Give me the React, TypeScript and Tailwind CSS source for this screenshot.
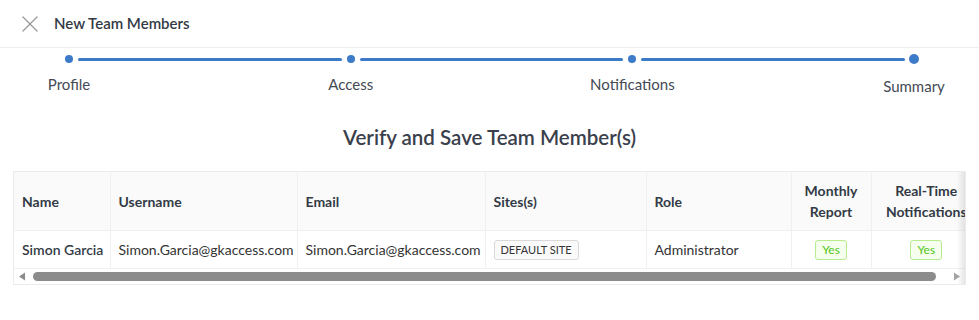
import { X } from 'lucide-react'

const steps = ['Profile', 'Access', 'Notifications', 'Summary']

const font = { fontFamily: 'Lato, "Open Sans", "Noto Sans", sans-serif' }

function Stepper() {
  return (
    <div className="flex items-start pl-[65px] pr-[61px] pt-[7px]">
      {steps.map((label, i) => {
        const last = i === steps.length - 1
        return (
          <div key={label} className={last ? 'flex' : 'flex flex-1'}>
            <div className="flex w-[8px] flex-col items-center">
              {last ? (
                <div className="mt-[-1px] h-[10px] w-[10px] shrink-0 rounded-full bg-[#3d7bc9]" />
              ) : (
                <div className="h-[8px] w-[8px] shrink-0 rounded-full bg-[#3d7bc9]" />
              )}
              <span
                className={`whitespace-nowrap text-[15px] text-[#444a55] ${last ? 'mt-[11px]' : 'mt-[10px]'}`}
              >
                {label}
              </span>
            </div>
            {!last && <div className="mx-[5px] mt-[3px] h-[3px] flex-1 rounded-full bg-[#3d7bc9]" />}
          </div>
        )
      })}
    </div>
  )
}

function Tag({ children }: { children: React.ReactNode }) {
  return (
    <span className="inline-flex h-[20px] items-center rounded-[3px] border border-[#d9d9d9] bg-[#fafafa] px-[6px] text-[11px] text-[#333]">
      {children}
    </span>
  )
}

function Yes() {
  return (
    <span className="inline-flex h-[20px] items-center rounded-[3px] border border-[#b7eb8f] bg-[#f6ffed] px-[6px] text-[12px] text-[#52c41a]">
      Yes
    </span>
  )
}

export default function App() {
  return (
    <div className="h-[320px] w-[979px] bg-white" style={font}>
      {/* Header */}
      <div className="flex h-[48px] items-center border-b border-[#eeeeee] pl-[16px]">
        <X className="h-[28px] w-[28px] text-[#999999]" strokeWidth={1.1} />
        <h1 className="ml-[10px] text-[15px] font-semibold text-[#333a46]">New Team Members</h1>
      </div>

      <Stepper />

      <h2 className="mt-[24px] text-center text-[20.5px] font-semibold text-[#3a404c]">
        Verify and Save Team Member(s)
      </h2>

      {/* Table */}
      <div className="relative mx-[13px] mt-[19px] overflow-hidden border border-[#ebebeb]">
        <table className="w-[967px] table-fixed border-collapse text-[14px] text-[#333]">
          <colgroup>
            <col className="w-[96px]" />
            <col className="w-[187px]" />
            <col className="w-[188px]" />
            <col className="w-[161px]" />
            <col className="w-[145px]" />
            <col className="w-[80px]" />
            <col className="w-[110px]" />
          </colgroup>
          <thead>
            <tr className="h-[58px] bg-[#fafafa] font-semibold text-[#333a46]">
              <th className="border-r border-b border-[#f0f0f0] px-[8px] text-left">Name</th>
              <th className="border-r border-b border-[#f0f0f0] px-[8px] text-left">Username</th>
              <th className="border-r border-b border-[#f0f0f0] px-[8px] text-left">Email</th>
              <th className="border-r border-b border-[#f0f0f0] px-[8px] text-left">Sites(s)</th>
              <th className="border-r border-b border-[#f0f0f0] px-[8px] text-left">Role</th>
              <th className="border-r border-b border-[#f0f0f0] px-[4px] text-center leading-[21px]">
                Monthly Report
              </th>
              <th className="border-b border-[#f0f0f0] px-[4px] text-center leading-[21px]">
                Real-Time Notifications
              </th>
            </tr>
          </thead>
          <tbody>
            <tr className="h-[38px]">
              <td className="whitespace-nowrap border-r border-b border-[#f0f0f0] px-[8px] font-semibold text-[#333a46]">
                Simon Garcia
              </td>
              <td className="whitespace-nowrap border-r border-b border-[#f0f0f0] px-[8px]">Simon.Garcia@gkaccess.com</td>
              <td className="whitespace-nowrap border-r border-b border-[#f0f0f0] px-[8px]">Simon.Garcia@gkaccess.com</td>
              <td className="border-r border-b border-[#f0f0f0] px-[8px]">
                <Tag>DEFAULT SITE</Tag>
              </td>
              <td className="border-r border-b border-[#f0f0f0] px-[8px]">Administrator</td>
              <td className="border-r border-b border-[#f0f0f0] text-center">
                <Yes />
              </td>
              <td className="border-b border-[#f0f0f0] text-center">
                <Yes />
              </td>
            </tr>
          </tbody>
        </table>

        {/* Scrollbar */}
        <div className="flex h-[15px] items-center px-[4px]">
          <svg width="8" height="9" viewBox="0 0 8 9" className="shrink-0">
            <path d="M7 0.5 L1 4.5 L7 8.5 Z" fill="#8c8c8c" />
          </svg>
          <div className="ml-[7px] mr-[17px] h-[9px] flex-1 rounded-full bg-[#8c8c8c]" />
          <svg width="8" height="9" viewBox="0 0 8 9" className="shrink-0">
            <path d="M1 0.5 L7 4.5 L1 8.5 Z" fill="#a3a3a3" />
          </svg>
        </div>

        {/* Right scroll shadow */}
        <div className="pointer-events-none absolute top-0 right-0 bottom-0 w-[8px] bg-gradient-to-l from-black/10 to-transparent" />
      </div>
    </div>
  )
}
